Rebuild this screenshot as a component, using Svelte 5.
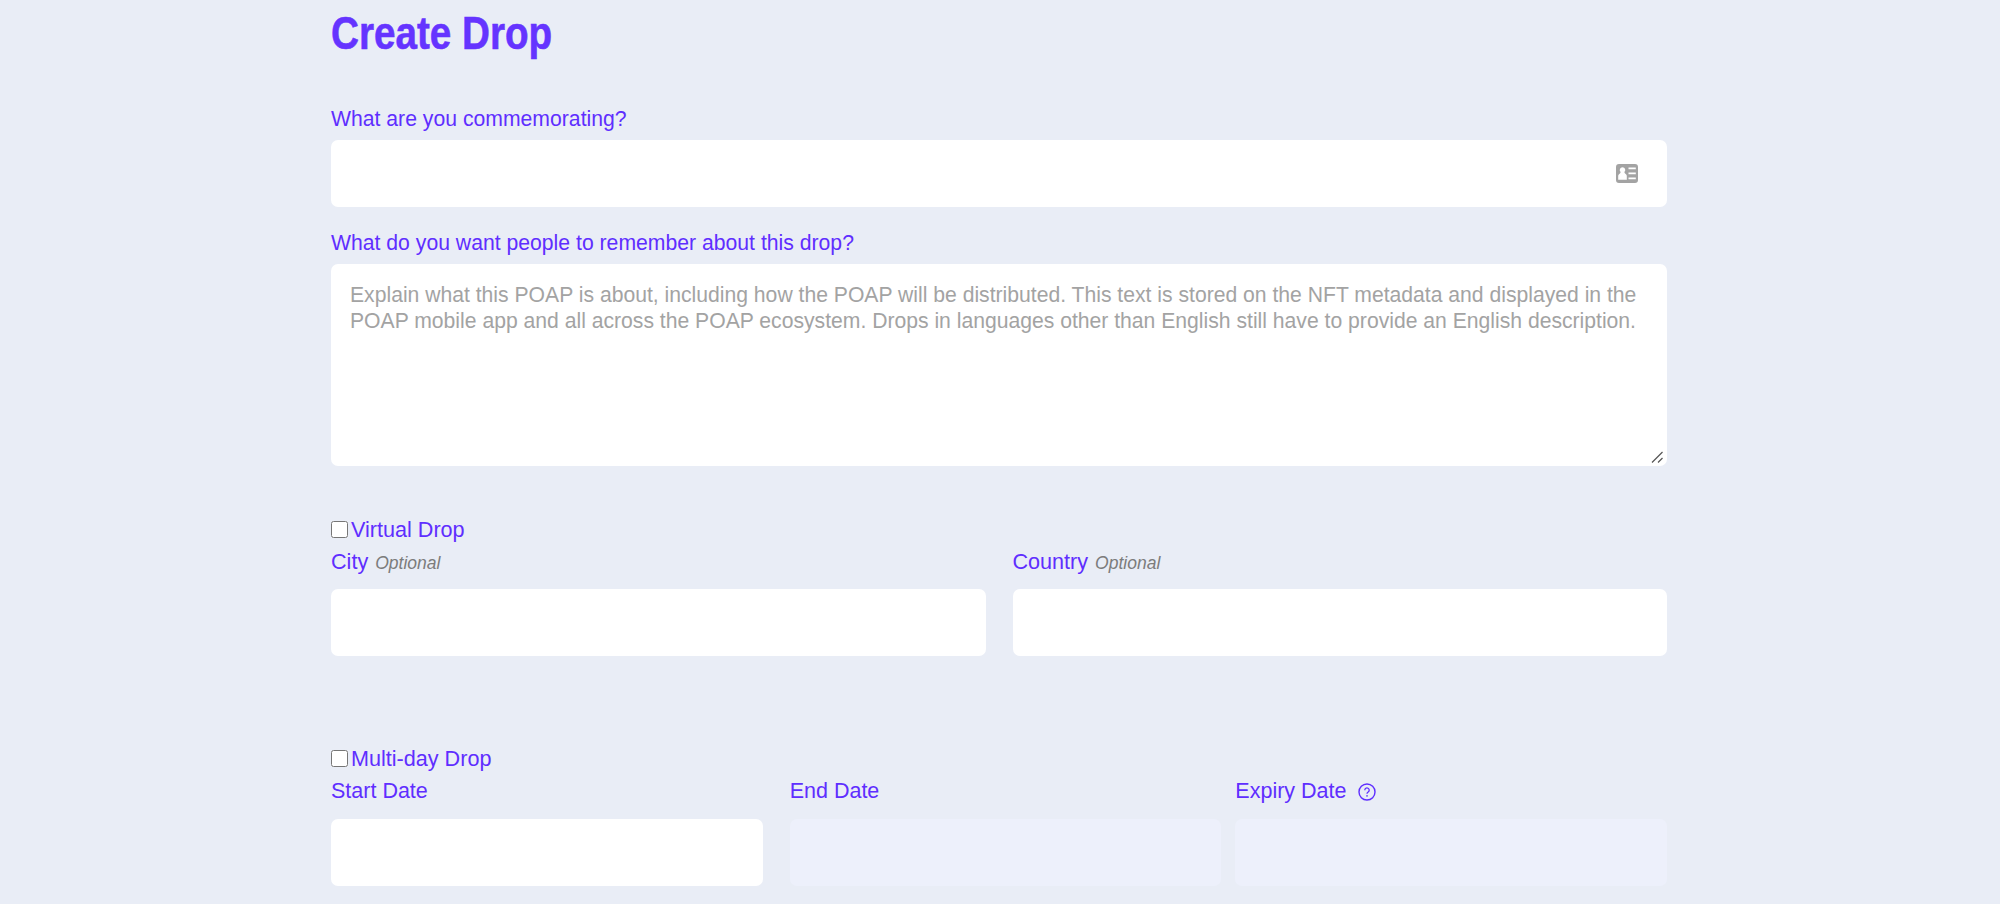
<script>
  let virtual = false;
  let multiDay = false;
</script>

<div class="page">
  <h1>Create Drop</h1>

  <label class="field first">
    <span class="label">What are you commemorating?</span>
    <div class="with-icon">
      <input type="text" />
      <svg class="card-icon" viewBox="0 0 22 19" width="22" height="19" aria-hidden="true">
        <path fill="#a3a3a3" fill-rule="evenodd" d="M3 0h16a3 3 0 0 1 3 3v13a3 3 0 0 1-3 3H3a3 3 0 0 1-3-3V3a3 3 0 0 1 3-3zM6.500 3.200a2.800 2.800 0 0 0-1.800 4.900C4.400 9 4 9.600 3.300 10.100c-.8.5-1.100 1.200-1.100 2.100v3.600h8.600v-3.600c0-.9-.3-1.600-1.100-2.100C9 9.600 8.600 9 8.300 8.100a2.800 2.800 0 0 0-1.800-4.900zm6 .3v1.800h7.300V3.500zm0 5v1.800h7.300V8.500zm0 5v1.800h7.300v-1.800z"/>
      </svg>
    </div>
  </label>

  <label class="field second">
    <span class="label">What do you want people to remember about this drop?</span>
    <div class="with-icon">
      <textarea placeholder="Explain what this POAP is about, including how the POAP will be distributed. This text is stored on the NFT metadata and displayed in the POAP mobile app and all across the POAP ecosystem. Drops in languages other than English still have to provide an English description."></textarea>
      <svg class="resizer" viewBox="0 0 12 12" width="12" height="12" aria-hidden="true">
        <path d="M1 11.500 11.500 1M7 11.500l4.500-4.500" stroke="#555" stroke-width="1.200" fill="none"/>
      </svg>
    </div>
  </label>

  <label class="check virtual">
    <input type="checkbox" bind:checked={virtual} />
    <span>Virtual Drop</span>
  </label>
  <div class="row two">
    <label class="field">
      <span class="label tight">City <em>Optional</em></span>
      <input type="text" />
    </label>
    <label class="field">
      <span class="label tight">Country <em>Optional</em></span>
      <input type="text" />
    </label>
  </div>

  <label class="check multi">
    <input type="checkbox" bind:checked={multiDay} />
    <span>Multi-day Drop</span>
  </label>
  <div class="row three">
    <label class="field">
      <span class="label date">Start Date</span>
      <input type="text" />
    </label>
    <label class="field">
      <span class="label date">End Date</span>
      <input type="text" disabled />
    </label>
    <label class="field">
      <span class="label date">Expiry Date
        <svg class="help" viewBox="0 0 18 18" width="18" height="18" aria-hidden="true">
          <circle cx="9" cy="9" r="8" fill="none" stroke="#5f2eff" stroke-width="1.400"/>
          <path d="M6.800 7.200a2.200 2.200 0 1 1 3.400 1.800c-.8.5-1.200.9-1.200 1.700" fill="none" stroke="#5f2eff" stroke-width="1.300"/>
          <circle cx="9" cy="12.900" r=".8" fill="#5f2eff"/>
        </svg>
      </span>
      <input type="text" disabled />
    </label>
  </div>
</div>

<style>
  :global(body) {
    background: #e9edf6;
    overflow: hidden;
  }

  .page {
    width: 1336px;
    margin-left: 331px;
    height: 904px;
    font-family: "Liberation Sans", Arial, sans-serif;
    color: #5f2eff;
  }

  h1 {
    margin: 0;
    padding-top: 7px;
    padding-bottom: 1px;
    font-size: 46px;
    line-height: 52px;
    font-weight: 700;
    color: #6534ff;
    transform: scaleX(0.84);
    transform-origin: left;
    -webkit-text-stroke: 0.6px #6534ff;
  }

  .field {
    display: block;
  }

  .first {
    margin-top: 47px;
  }

  .second {
    margin-top: 24px;
  }

  .label {
    display: block;
    font-size: 21.200px;
    line-height: 24px;
    margin-bottom: 9px;
  }

  .label.tight {
    font-size: 21.600px;
    margin-bottom: 14px;
  }

  .label.date {
    font-size: 21.500px;
    margin-bottom: 16px;
  }

  em {
    font-size: 17.500px;
    color: #7c7c7c;
    margin-left: 1px;
  }

  input[type="text"],
  textarea {
    display: block;
    box-sizing: border-box;
    width: 100%;
    height: 67px;
    border: none;
    border-radius: 7px;
    background: #fff;
    outline: none;
  }

  input:disabled {
    background: #edf0fb;
  }

  textarea {
    height: 202px;
    padding: 18px 19px 19px;
    font-family: "Liberation Sans", Arial, sans-serif;
    font-size: 21.150px;
    line-height: 25.500px;
    resize: none;
  }

  textarea::placeholder {
    color: #a3a3a3;
    opacity: 1;
  }

  .with-icon {
    position: relative;
  }

  .card-icon {
    position: absolute;
    right: 29px;
    top: 24px;
  }

  .resizer {
    position: absolute;
    right: 4px;
    bottom: 3px;
  }

  .check {
    display: flex;
    align-items: center;
    gap: 3px;
    font-size: 21.600px;
    line-height: 24px;
  }

  .check input {
    width: 17px;
    height: 17px;
    margin: 0 0 2px;
  }

  .virtual {
    margin-top: 52px;
  }

  .multi {
    margin-top: 91px;
  }

  .row {
    display: flex;
    margin-top: 8px;
  }

  .row .field {
    flex: 1;
  }

  .two {
    gap: 27px;
  }

  .three {
    gap: 14px;
  }

  .three .field:first-child {
    margin-right: 13px;
  }

  .help {
    vertical-align: -3px;
    margin-left: 6px;
  }
</style>
